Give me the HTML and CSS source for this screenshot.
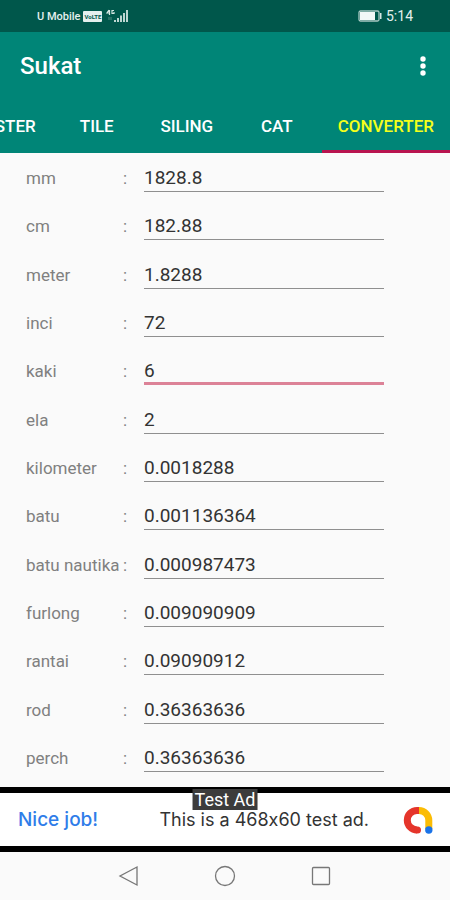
FILE: index.html
```html
<!DOCTYPE html>
<html lang="ms">
<head>
<meta charset="utf-8">
<meta name="viewport" content="width=device-width, initial-scale=1">
<title>Sukat</title>
<link rel="stylesheet" href="styles.css">
</head>
<body>
<div class="status">
  <div class="status-group">
    <span class="carrier">U Mobile</span>
    <span class="volte">VoLTE</span>
    <svg class="signal" width="24" height="14" viewBox="0 0 24 14" aria-hidden="true">
      <path d="M4 1 2 4h3M4.500 1v5M9 1.500H7v3h2V3" fill="none" stroke="#d5e6e3" stroke-width="1.200"/>
      <path d="M4 8v3M6 8v3" stroke="#4d8a80" stroke-width="1"/>
      <path d="M9 11h2v2H9zM12 9h2v4h-2zM15 6.500h2V13h-2zM18 4h2v9h-2zM21 1h2v12h-2z" fill="#bcd6d1"/>
    </svg>
  </div>
  <div class="status-group">
    <svg width="25" height="12" viewBox="0 0 25 12" aria-hidden="true">
      <rect x="1" y="1" width="20" height="10" rx="1.500" fill="none" stroke="#a9c9c3" stroke-width="1.300"/>
      <rect x="2" y="2" width="15" height="8" fill="#f2f8f7"/>
      <path d="M22 3h1.500v6H22z" fill="#d5e6e3"/>
    </svg>
    <span class="clock">5:14</span>
  </div>
</div>
<header class="appbar">
  <div class="toolbar">
    <h1 class="title">Sukat</h1>
    <button class="more" type="button" aria-label="Menu">
      <svg width="6" height="20" viewBox="0 0 6 20"><circle cx="3" cy="3" r="2.700"/><circle cx="3" cy="10" r="2.700"/><circle cx="3" cy="17" r="2.700"/></svg>
    </button>
  </div>
  <nav class="tabs">
    <a class="tab" href="#plaster">PLASTER</a>
    <a class="tab" href="#tile">TILE</a>
    <a class="tab" href="#siling">SILING</a>
    <a class="tab" href="#cat">CAT</a>
    <a class="tab tab-active" href="#converter" aria-current="page">CONVERTER</a>
  </nav>
</header>
<main class="form">
  <div class="row"><label class="label" for="mm"><span>mm</span><span>:</span></label><input class="field" id="mm" value="1828.8"></div>
  <div class="row"><label class="label" for="cm"><span>cm</span><span>:</span></label><input class="field" id="cm" value="182.88"></div>
  <div class="row"><label class="label" for="meter"><span>meter</span><span>:</span></label><input class="field" id="meter" value="1.8288"></div>
  <div class="row"><label class="label" for="inci"><span>inci</span><span>:</span></label><input class="field" id="inci" value="72"></div>
  <div class="row"><label class="label" for="kaki"><span>kaki</span><span>:</span></label><input class="field field-active" id="kaki" value="6"></div>
  <div class="row"><label class="label" for="ela"><span>ela</span><span>:</span></label><input class="field" id="ela" value="2"></div>
  <div class="row"><label class="label" for="kilometer"><span>kilometer</span><span>:</span></label><input class="field" id="kilometer" value="0.0018288"></div>
  <div class="row"><label class="label" for="batu"><span>batu</span><span>:</span></label><input class="field" id="batu" value="0.001136364"></div>
  <div class="row"><label class="label" for="nautika"><span>batu nautika</span><span>:</span></label><input class="field" id="nautika" value="0.000987473"></div>
  <div class="row"><label class="label" for="furlong"><span>furlong</span><span>:</span></label><input class="field" id="furlong" value="0.009090909"></div>
  <div class="row"><label class="label" for="rantai"><span>rantai</span><span>:</span></label><input class="field" id="rantai" value="0.09090912"></div>
  <div class="row"><label class="label" for="rod"><span>rod</span><span>:</span></label><input class="field" id="rod" value="0.36363636"></div>
  <div class="row"><label class="label" for="perch"><span>perch</span><span>:</span></label><input class="field" id="perch" value="0.36363636"></div>
</main>
<aside class="ad">
  <span class="ad-badge">Test Ad</span>
  <span class="ad-title">Nice job!</span>
  <span class="ad-text">This is a 468x60 test ad.</span>
  <svg class="ad-logo" width="30" height="28" viewBox="0 0 30 28" fill="none" aria-hidden="true">
    <path d="M16 4.500a9.800 9.800 0 0 1 9.800 9.800V23" stroke="#fbbc04" stroke-width="7"/>
    <path d="M16 4.500h-2a9.700 9.700 0 0 0 0 19.400" stroke="#e5352b" stroke-width="7"/>
    <circle cx="14.500" cy="23.900" r="3.500" fill="#e5352b"/>
    <circle cx="25.800" cy="24" r="3.700" fill="#1a73e8"/>
  </svg>
</aside>
<nav class="sysnav">
  <button class="sysbtn" type="button" aria-label="Back"><svg width="22" height="22" viewBox="0 0 22 22"><path d="M19 2v18L2 11z"/></svg></button>
  <button class="sysbtn" type="button" aria-label="Home"><svg width="22" height="22" viewBox="0 0 22 22"><circle cx="11" cy="11" r="9.500"/></svg></button>
  <button class="sysbtn" type="button" aria-label="Recent"><svg width="22" height="22" viewBox="0 0 22 22"><rect x="2.500" y="2.500" width="17" height="17" rx="1"/></svg></button>
</nav>
</body>
</html>
```

FILE: styles.css
```css
* { box-sizing: border-box; }
body {
  margin: 0;
  min-height: 100vh;
  display: flex;
  flex-direction: column;
  background: #fafafa;
  font-family: Roboto, "Liberation Sans", sans-serif;
}
button { border: 0; padding: 0; background: none; display: flex; align-items: center; justify-content: center; }
.status {
  height: 32px;
  padding: 0 37px;
  display: flex;
  align-items: center;
  justify-content: space-between;
  background: #00574b;
  color: #e4f0ee;
}
.status-group { display: flex; align-items: center; gap: 3px; }
.carrier { font-size: 11px; font-weight: 500; }
.volte {
  padding: 0 1px;
  border-radius: 1px;
  background: #e4f0ee;
  color: #00574b;
  font-size: 6px;
  line-height: 11px;
  font-weight: 700;
}
.clock { font-size: 14px; }
.appbar { background: #008577; color: #fff; }
.toolbar {
  height: 68px;
  padding: 0 20px;
  display: flex;
  align-items: center;
  justify-content: space-between;
}
.title { margin: 0; font-size: 24px; font-weight: 500; }
.more { width: 14px; height: 32px; fill: #fff; }
.tabs { display: flex; justify-content: flex-end; overflow: hidden; }
.tab {
  flex: none;
  min-width: 90px;
  height: 53px;
  padding: 0 16px;
  border-bottom: 3px solid transparent;
  font-size: 17px;
  font-weight: 500;
  line-height: 52px;
  text-align: center;
  text-decoration: none;
  color: #fff;
}
.tab-active { color: #f4ff1a; border-color: #b8144f; }
.form {
  flex: 1;
  padding: 1px 0 5px 26px;
  display: grid;
  grid-auto-rows: 1fr;
}
.row {
  min-height: 40px;
  display: grid;
  grid-template-columns: 101px minmax(0, 240px);
  column-gap: 17px;
  align-items: center;
}
.label { display: flex; justify-content: space-between; font-size: 17px; color: #808080; }
.field {
  width: 100%;
  height: 28px;
  border: 0;
  border-bottom: 1px solid #8f8f8f;
  padding: 0;
  background: none;
  outline: 0;
  border-radius: 0;
  font: inherit;
  font-size: 19px;
  color: #333;
}
.field-active { padding-top: 2px; border-bottom: 3px solid #dc8297; }
.ad {
  position: relative;
  height: 65px;
  padding: 0 17px 0 18px;
  border: solid #000;
  border-width: 6px 0;
  display: flex;
  align-items: center;
  gap: 34px;
  background: #fff;
  font-family: Inter, sans-serif;
  font-feature-settings: "calt" 0;
}
.ad-badge {
  position: absolute;
  top: -4px;
  left: 50%;
  transform: translateX(-50%);
  padding: 0 2px;
  background: #3c3c3c;
  color: #fff;
  font-family: Roboto, sans-serif;
  font-size: 18px;
  line-height: 21px;
  white-space: nowrap;
}
.ad-title { font-size: 19px; font-weight: 500; color: #2f7de9; white-space: nowrap; }
.ad-text { margin-left: auto; font-size: 18px; color: #333; white-space: nowrap; }
.ad-logo { flex: none; }
.sysnav { height: 48px; display: flex; align-items: center; justify-content: center; gap: 74px; }
.sysbtn svg { fill: none; stroke: #777; stroke-width: 1.300; }
```
